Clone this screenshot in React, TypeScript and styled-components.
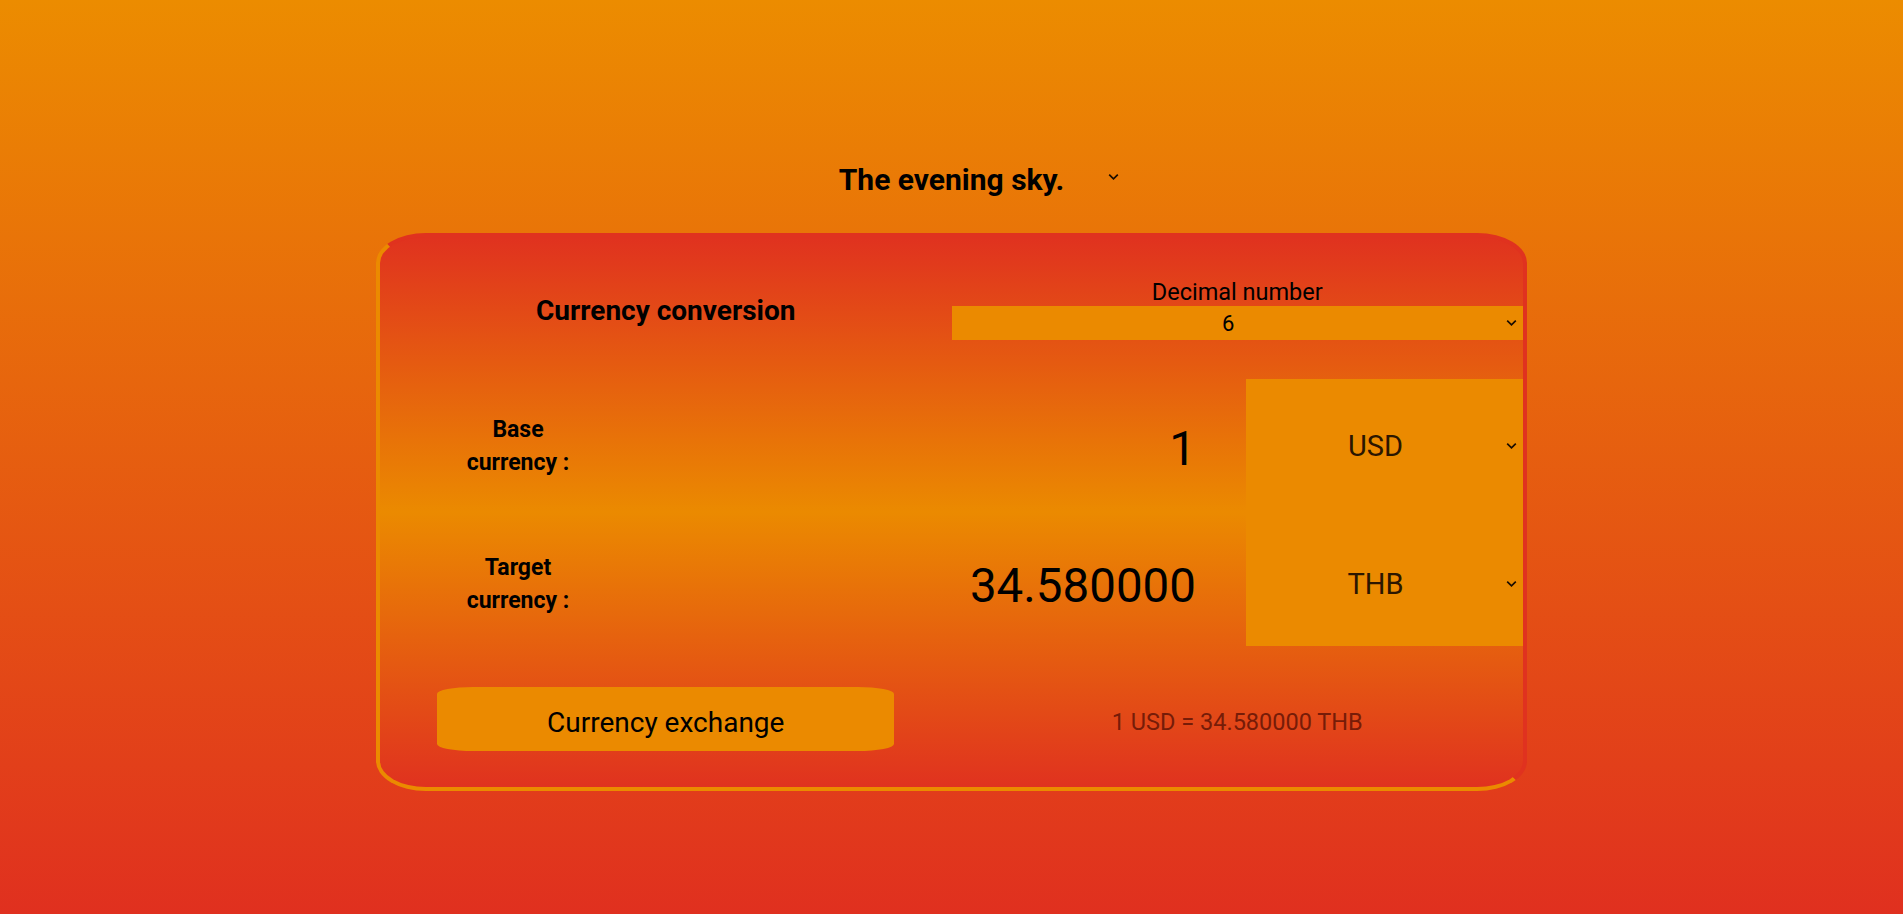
import React from "react";
import styled, { createGlobalStyle } from "styled-components";

const ORANGE = "#eb8a00";
const RED = "#e0321f";

const GlobalStyle = createGlobalStyle`
  html, body {
    margin: 0;
    padding: 0;
    min-height: 100%;
  }
  body {
    min-height: 914px;
    background: linear-gradient(to bottom, #ec8c00 0%, #e0301f 100%);
    font-family: Roboto, "Noto Sans", sans-serif;
    color: #000;
  }
  * { box-sizing: border-box; }
`;

const Page = styled.main`
  display: flex;
  flex-direction: column;
  align-items: center;
  padding-top: 159px;
  min-height: 914px;
`;

const SelectWrap = styled.div<{ $w?: string; $h: number; $bg?: string }>`
  position: relative;
  width: ${(p) => p.$w ?? "100%"};
  height: ${(p) => p.$h}px;
  background: ${(p) => p.$bg ?? "transparent"};
`;

const NativeSelect = styled.select<{
  $size: number;
  $weight?: number;
  $color?: string;
  $pad?: string;
}>`
  appearance: none;
  -webkit-appearance: none;
  width: 100%;
  height: 100%;
  border: none;
  outline: none;
  background: transparent;
  margin: 0;
  padding: ${(p) => p.$pad ?? "0 30px 0 12px"};
  font-family: Roboto, "Noto Sans", sans-serif;
  font-size: ${(p) => p.$size}px;
  font-weight: ${(p) => p.$weight ?? 400};
  color: ${(p) => p.$color ?? "#000"};
  text-align: center;
  text-align-last: center;
  cursor: pointer;
`;

const ChevronBox = styled.span<{ $dy?: number }>`
  position: absolute;
  right: 6px;
  top: calc(50% + ${(p) => p.$dy ?? 0}px);
  transform: translateY(-50%);
  display: flex;
  pointer-events: none;
`;

const Chevron = ({ dy }: { dy?: number }) => (
  <ChevronBox $dy={dy}>
    <svg width="11" height="7" viewBox="0 0 11 7">
      <polyline points="1.2,1.2 5.5,5.4 9.8,1.2" fill="none" stroke="#1a0d00" strokeWidth="1.7" />
    </svg>
  </ChevronBox>
);

const Card = styled.section`
  margin-top: 34px;
  width: 1151px;
  height: 558px;
  display: flex;
  flex-direction: column;
  border: 4px solid;
  border-color: ${RED} ${RED} ${ORANGE} ${ORANGE};
  border-radius: 50px / 30px;
  background: linear-gradient(to bottom, ${RED} 0%, ${ORANGE} 50%, ${RED} 100%);
`;

const HalfRow = styled.div<{ $h?: number }>`
  display: grid;
  grid-template-columns: 1fr 1fr;
  align-items: center;
  ${(p) => (p.$h ? `height: ${p.$h}px;` : "flex: 1;")}
`;

const CardTitle = styled.h2`
  margin: 0;
  padding-top: 5px;
  text-align: center;
  font-size: 28px;
  font-weight: 700;
  line-height: 34px;
`;

const DecimalBlock = styled.div`
  display: flex;
  flex-direction: column;
  align-items: stretch;
  padding-top: 3px;
`;

const SmallLabel = styled.label`
  text-align: center;
  font-size: 23.5px;
  line-height: 27px;
  margin-bottom: 0;
`;

const CurrencyGrid = styled.div`
  display: grid;
  grid-template-columns: 276px 1fr 277px;
  grid-template-rows: 134px 133px;
`;

const RowLabel = styled.label<{ $shift: number }>`
  align-self: center;
  justify-self: center;
  width: 130px;
  margin-top: ${(p) => p.$shift * 2}px;
  text-align: center;
  font-size: 23px;
  font-weight: 700;
  line-height: 33px;
`;

const Amount = styled.input<{ $shift: number }>`
  align-self: center;
  width: 100%;
  border: none;
  outline: none;
  background: transparent;
  margin-top: ${(p) => p.$shift * 2 + 5}px;
  padding: 0 50px 0 0;
  text-align: right;
  font-family: Roboto, "Noto Sans", sans-serif;
  font-size: 47.5px;
  color: #000;
`;

const ExchangeButton = styled.button`
  justify-self: center;
  width: 457px;
  height: 64px;
  border: none;
  border-radius: 36px / 7px;
  background: ${ORANGE};
  font-family: Roboto, "Noto Sans", sans-serif;
  font-size: 28px;
  color: #000;
  cursor: pointer;
  margin-top: 5px;
  padding: 6px 0 0;
`;

const Result = styled.p`
  margin: 10px 0 0;
  text-align: center;
  font-size: 23.5px;
  color: #761c08;
`;

export default function App() {
  return (
    <>
      <GlobalStyle />
      <Page>
        <SelectWrap $w="347px" $h={40}>
          <NativeSelect $size={30} $weight={700} $pad="0 24px" defaultValue="evening">
            <option value="evening">The evening sky.</option>
            <option value="morning">The morning sky.</option>
          </NativeSelect>
          <Chevron dy={-2} />
        </SelectWrap>
        <Card>
          <HalfRow $h={142}>
            <CardTitle>Currency conversion</CardTitle>
            <DecimalBlock>
              <SmallLabel>Decimal number</SmallLabel>
              <SelectWrap $h={34} $bg={ORANGE}>
                <NativeSelect $size={22} defaultValue="6">
                  {[0, 1, 2, 3, 4, 5, 6].map((n) => (
                    <option key={n} value={String(n)}>
                      {n}
                    </option>
                  ))}
                </NativeSelect>
                <Chevron />
              </SelectWrap>
            </DecimalBlock>
          </HalfRow>
          <CurrencyGrid>
            <RowLabel $shift={0}>Base currency :</RowLabel>
            <Amount $shift={0} defaultValue="1" />
            <SelectWrap $h={134} $bg={ORANGE}>
              <NativeSelect $size={29} $color="#2b1600" defaultValue="USD">
                <option>USD</option>
                <option>THB</option>
              </NativeSelect>
              <Chevron />
            </SelectWrap>
            <RowLabel $shift={4}>Target currency :</RowLabel>
            <Amount $shift={4} defaultValue="34.580000" readOnly />
            <SelectWrap $h={133} $bg={ORANGE}>
              <NativeSelect
                $size={29}
                $color="#2b1600"
                $pad="9px 30px 0 12px"
                defaultValue="THB"
              >
                <option>USD</option>
                <option>THB</option>
              </NativeSelect>
              <Chevron dy={4} />
            </SelectWrap>
          </CurrencyGrid>
          <HalfRow>
            <ExchangeButton>Currency exchange</ExchangeButton>
            <Result>1 USD = 34.580000 THB</Result>
          </HalfRow>
        </Card>
      </Page>
    </>
  );
}
